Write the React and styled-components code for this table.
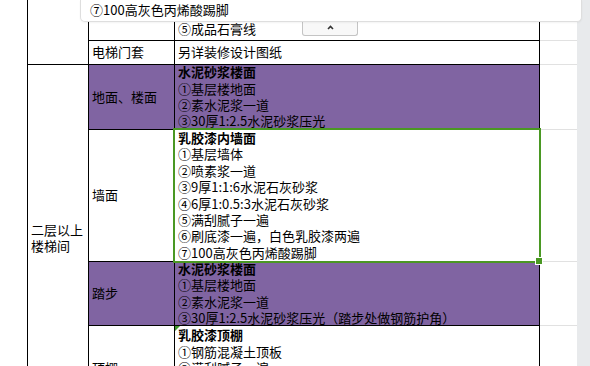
import React from 'react';
import styled, { createGlobalStyle } from 'styled-components';

const GlobalStyle = createGlobalStyle`
  html, body {
    margin: 0;
    padding: 0;
    background: #fff;
  }
  body {
    font-family: "Noto Sans CJK SC", "Noto Sans", sans-serif;
  }
  * {
    box-sizing: border-box;
  }
`;

const Page = styled.div`
  position: relative;
  display: flex;
  width: 590px;
  height: 366px;
  overflow: hidden;
`;

const Sheet = styled.div`
  display: grid;
  grid-template-columns: 28px 61px 86px 365px 37px;
  grid-template-rows: 41px 24px 65px 132px 64px 86px;
  width: 577px;
  align-self: flex-start;
  font-size: 13px;
  line-height: 16.4px;
  color: #000;
`;

const Scrollbar = styled.div`
  width: 13px;
  height: 100%;
  background: #e8eaec;
`;

const Gutter = styled.div`
  grid-row: span 6;
  border-right: 1px solid #000;
`;

const Cell = styled.div`
  position: relative;
  display: flex;
  flex-direction: column;
  justify-content: ${({ $align }) => ($align === 'bottom' ? 'flex-end' : 'center')};
  grid-row: span ${({ $span }) => $span || 1};
  padding: 0 3px ${({ $align }) => ($align === 'bottom' ? '3px' : '0')};
  background: ${({ $purple }) => ($purple ? '#8064a2' : '#fff')};
  border-right: 1px solid #000;
  border-bottom: 1px solid #000;
  white-space: nowrap;

  ${({ $selected }) =>
    $selected &&
    `
    &::after {
      content: '';
      position: absolute;
      top: -2px;
      left: -2px;
      right: -2px;
      bottom: -2px;
      border: 2px solid #4a9823;
      pointer-events: none;
      z-index: 2;
    }
  `}
`;

const WrapCell = styled(Cell)`
  white-space: normal;
`;

const Handle = styled.div`
  position: absolute;
  right: -4px;
  bottom: -4px;
  width: 8px;
  height: 8px;
  background: #4a9823;
  border: 1px solid #fff;
  z-index: 3;
`;

const ErrorMark = styled.div`
  position: absolute;
  top: 0;
  left: 0;
  width: 0;
  height: 0;
  border-top: 5px solid #3f9a2a;
  border-right: 5px solid transparent;
`;

const GridCell = styled.div`
  border-bottom: 1px solid #e1e1e1;
`;

const Title = styled.div`
  font-weight: 700;
`;

const Line = styled.div``;

const Peek = styled.div`
  position: absolute;
  left: 80px;
  top: 0;
  width: 502px;
  height: 22px;
  padding-left: 9px;
  background: #fff;
  border: 1px solid #dedede;
  border-top: none;
  border-radius: 0 0 5px 5px;
  box-shadow: 0 1px 2px rgba(0, 0, 0, 0.05);
  font-size: 13px;
  line-height: 20px;
  color: #000;
  z-index: 5;
`;

const Toggle = styled.div`
  position: absolute;
  left: 302px;
  top: 20px;
  width: 56px;
  height: 16px;
  display: flex;
  align-items: center;
  justify-content: center;
  background: #f8f8f8;
  border: 1px solid #c4c4c4;
  border-top: none;
  border-radius: 0 0 3px 3px;
  z-index: 4;
`;

const Caret = () => (
  <svg width="7" height="5" viewBox="0 0 7 5">
    <path d="M1 4 L3.5 1.5 L6 4" fill="none" stroke="#333" strokeWidth="1.6" />
  </svg>
);

const floorSpec = ['水泥砂浆楼面', '①基层楼地面', '②素水泥浆一道'];

const wallSpec = [
  '①基层墙体',
  '②喷素浆一道',
  '③9厚1:1:6水泥石灰砂浆',
  '④6厚1:0.5:3水泥石灰砂浆',
  '⑤满刮腻子一遍',
  '⑥刷底漆一遍，白色乳胶漆两遍',
  '⑦100高灰色丙烯酸踢脚',
];

const ceilingSpec = ['①钢筋混凝土顶板', '②满刮腻子一遍', '③刷底漆一遍', '④乳胶漆两遍'];

const Spec = ({ title, lines }) => (
  <>
    <Title>{title}</Title>
    {lines.map((l) => (
      <Line key={l}>{l}</Line>
    ))}
  </>
);

export default function App() {
  return (
    <Page>
      <GlobalStyle />
      <Sheet>
        <Gutter />
        {/* row 1 */}
        <Cell $span={2} />
        <Cell />
        <Cell $align="bottom">⑤成品石膏线</Cell>
        <GridCell />
        {/* row 2 */}
        <Cell>电梯门套</Cell>
        <Cell>另详装修设计图纸</Cell>
        <GridCell />
        {/* row 3 */}
        <WrapCell $span={4}>二层以上楼梯间</WrapCell>
        <Cell $purple>地面、楼面</Cell>
        <Cell $purple>
          <Spec title={floorSpec[0]} lines={[floorSpec[1], floorSpec[2], '③30厚1:2.5水泥砂浆压光']} />
        </Cell>
        <GridCell />
        {/* row 4 */}
        <Cell>墙面</Cell>
        <Cell $selected>
          <Spec title="乳胶漆内墙面" lines={wallSpec} />
          <Handle />
        </Cell>
        <GridCell />
        {/* row 5 */}
        <Cell $purple>踏步</Cell>
        <Cell $purple>
          <Spec
            title={floorSpec[0]}
            lines={[floorSpec[1], floorSpec[2], '③30厚1:2.5水泥砂浆压光（踏步处做钢筋护角）']}
          />
        </Cell>
        <GridCell />
        {/* row 6 */}
        <Cell>顶棚</Cell>
        <Cell>
          <ErrorMark />
          <Spec title="乳胶漆顶棚" lines={ceilingSpec} />
        </Cell>
        <GridCell />
      </Sheet>
      <Scrollbar />
      <Peek>⑦100高灰色丙烯酸踢脚</Peek>
      <Toggle>
        <Caret />
      </Toggle>
    </Page>
  );
}
